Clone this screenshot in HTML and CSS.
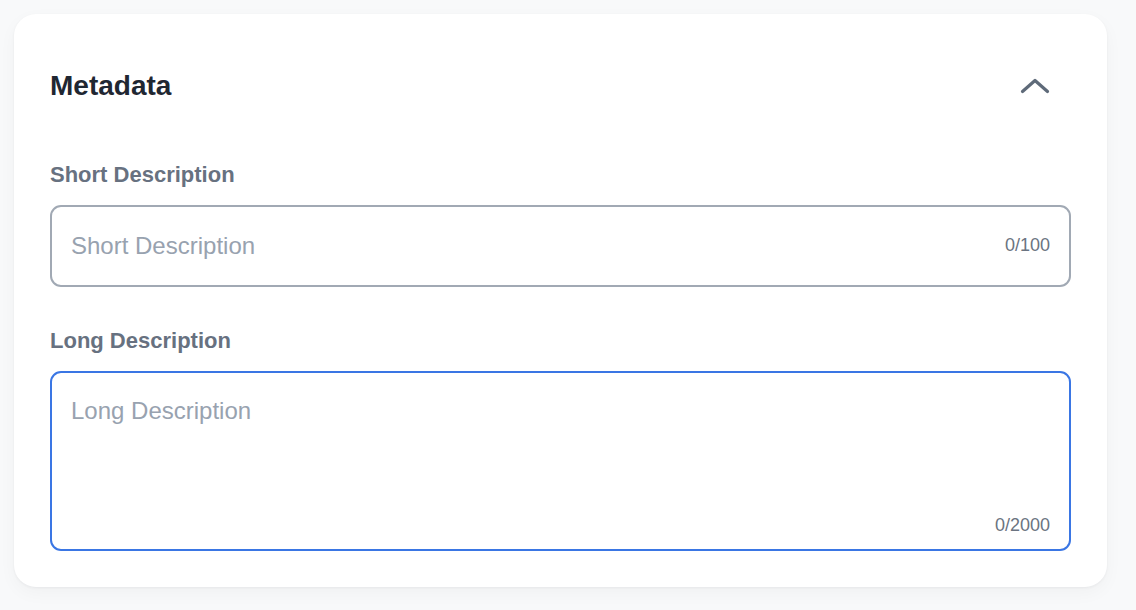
FILE: index.html
```
<!DOCTYPE html>
<html lang="en">
<head>
<meta charset="utf-8">
<title>Metadata</title>
<link rel="stylesheet" href="styles.css">
</head>
<body>
<section class="card">
  <header class="card-header">
    <h2 class="card-title">Metadata</h2>
    <button class="collapse-btn" type="button" aria-label="Collapse">
      <svg width="30" height="16" viewBox="0 0 30 16" fill="none" stroke="currentColor" stroke-width="3.2" stroke-linecap="round" stroke-linejoin="round"><path d="M2.5 13.5 L15 2.5 L27.5 13.5"/></svg>
    </button>
  </header>
  <div class="field">
    <label class="field-label">Short Description</label>
    <div class="control">
      <input class="text-input" type="text" placeholder="Short Description">
      <span class="counter counter-mid">0/100</span>
    </div>
  </div>
  <div class="field">
    <label class="field-label">Long Description</label>
    <div class="control">
      <textarea class="text-area" placeholder="Long Description"></textarea>
      <span class="counter counter-bottom">0/2000</span>
    </div>
  </div>
</section>
</body>
</html>
```
FILE: styles.css
```
* { box-sizing: border-box; }
html, body { margin: 0; padding: 0; }
body {
  background: #f8f9fa;
  font-family: "Liberation Sans", Arial, Helvetica, sans-serif;
  padding: 14px 29px 23px 14px;
}
.card {
  background: #ffffff;
  border-radius: 22px;
  box-shadow: 0 1px 3px rgba(17, 24, 39, 0.05), 0 6px 18px rgba(17, 24, 39, 0.035);
  padding: 0 36px 36px 36px;
  display: flex;
  flex-direction: column;
}
.card-header {
  height: 108px;
  padding-top: 36px;
  display: flex;
  align-items: center;
  justify-content: space-between;
}
.card-title {
  margin: 0;
  font-size: 28px;
  font-weight: 700;
  color: #1f2732;
  line-height: 72px;
}
.collapse-btn {
  border: 0;
  background: none;
  padding: 0;
  width: 72px;
  height: 72px;
  display: flex;
  align-items: center;
  justify-content: center;
  color: #5e6a79;
  cursor: pointer;
}
.collapse-btn svg { display: block; margin-top: -1px; }
.field {
  display: flex;
  flex-direction: column;
  gap: 15px;
  margin-top: 38px;
}
.field + .field { margin-top: 39px; }
.field-label {
  font-size: 22px;
  font-weight: 700;
  color: #677180;
  line-height: 30px;
}
.control { position: relative; }
.text-input, .text-area {
  display: block;
  width: 100%;
  font-family: inherit;
  font-size: 24px;
  color: #1f2732;
  background: #fff;
  border-radius: 11px;
  outline: none;
  margin: 0;
}
.text-input {
  height: 82px;
  border: 2px solid #a1a9b4;
  padding: 0 80px 0 19px;
}
.text-area {
  height: 180px;
  border: 2px solid #3a76e4;
  padding: 24px 19px;
  resize: none;
  line-height: 28px;
}
.text-input::placeholder, .text-area::placeholder { color: #98a2af; opacity: 1; }
.counter {
  position: absolute;
  right: 21px;
  font-size: 18px;
  color: #6b7481;
  line-height: 20px;
}
.counter-mid { top: 30px; }
.counter-bottom { bottom: 16px; }
```
